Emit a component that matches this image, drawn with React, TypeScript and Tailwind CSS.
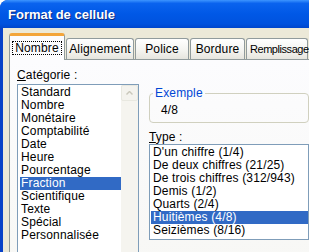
const categories = [
  "Standard",
  "Nombre",
  "Monétaire",
  "Comptabilité",
  "Date",
  "Heure",
  "Pourcentage",
  "Fraction",
  "Scientifique",
  "Texte",
  "Spécial",
  "Personnalisée",
];

const types = [
  "D'un chiffre (1/4)",
  "De deux chiffres (21/25)",
  "De trois chiffres (312/943)",
  "Demis (1/2)",
  "Quarts (2/4)",
  "Huitièmes (4/8)",
  "Seizièmes (8/16)",
];

const tabs = ["Alignement", "Police", "Bordure"];
const tabWidths = ["w-[68px]", "w-[54px]", "w-[55px]"];

export default function App() {
  return (
    <div className="flex h-[252px] w-[309px] flex-col overflow-hidden rounded-tl-[8px] bg-[#0842C8] font-['Liberation_Sans',sans-serif] text-[12px] leading-[13px] tracking-[0.15px] text-black">
      <div className="flex h-[28px] shrink-0 items-center bg-[linear-gradient(#3D95FF_0%,#0A63EE_12%,#0058E6_50%,#0052DE_85%,#0046CC_100%)] pl-[8px] pt-[1px]">
        <span className="text-[13px] font-bold tracking-normal text-white [text-shadow:1px_1px_#0a2a80]">Format de cellule</span>
      </div>

      <div className="ml-[3px] flex flex-1 flex-col bg-[#ECE9D8] pl-[6px] pt-[5px]">
        <div className="flex h-[26px] items-end">
          <div className="relative z-10 -mb-[1px] flex h-[27px] w-[56px] shrink-0 items-center justify-center rounded-t-[3px] border-x border-[#919B9C] border-t-[3px] border-t-[#F3A53A] bg-[#FCFCFE]">
            <span className="border border-dotted border-black px-[2px] leading-[12px]">Nombre</span>
          </div>
          {tabs.map((t, i) => (
            <div
              key={t}
              className={`ml-[1px] flex h-[21px] ${tabWidths[i]} shrink-0 items-center justify-center rounded-t-[3px] border-x border-t border-[#919B9C] bg-[linear-gradient(#FFFFFF,#F3F3EF_60%,#E6E5DE)] pt-[1px]`}
            >
              {t}
            </div>
          ))}
          <div className="ml-[1px] flex h-[21px] w-[62px] shrink-0 items-center rounded-t-[3px] border-x border-t border-[#919B9C] bg-[linear-gradient(#FFFFFF,#F3F3EF_60%,#E6E5DE)] pl-[3px] pt-[1px] text-[11px] tracking-[-0.45px] whitespace-nowrap">
            Remplissage
          </div>
        </div>

        <div className="flex flex-1 gap-[10px] border-l border-t border-[#919B9C] bg-[linear-gradient(#FCFCFE,#F7F7F4)] pl-[7px] pt-[9px]">
          <div className="flex w-[122px] shrink-0 flex-col">
            <div className="h-[15px]">
              <span className="underline">C</span>atégorie :
            </div>
            <div className="flex h-[200px] border border-[#7F9DB9] bg-white">
              <div className="flex flex-1 flex-col pl-[2px] pt-[1px]">
                {categories.map((c) => (
                  <div
                    key={c}
                    className={`h-[13px] pl-[1px] ${c === "Fraction" ? "bg-[#316AC5] text-white" : ""}`}
                  >
                    {c}
                  </div>
                ))}
              </div>
              <div className="flex w-[17px] flex-col bg-[#F5F4EF]">
                <div className="flex h-[16px] items-center justify-center rounded-[2px] border border-[#E8E8E0] bg-[#F4F3EE]">
                  <svg width="7" height="4" viewBox="0 0 7 4">
                    <path d="M0.5 3.5 L3.5 0.5 L6.5 3.5" fill="none" stroke="#C9C7BA" strokeWidth="1.4" />
                  </svg>
                </div>
              </div>
            </div>
          </div>

          <div className="flex flex-1 flex-col">
            <fieldset className="mt-[18px] h-[36px] rounded-[4px] border border-[#D0D0BF] pl-[11px]">
              <legend className="-ml-[8px] px-[2px] text-[#0046D5]">Exemple</legend>
              <div className="mt-[4px]">4/8</div>
            </fieldset>
            <div className="mt-[8px] h-[12px]">
              <span className="underline">T</span>ype :
            </div>
            <div className="mt-[1px] flex h-[96px] flex-col border border-[#7F9DB9] bg-white pl-[1px] pt-[1px]">
              {types.map((t) => (
                <div
                  key={t}
                  className={`h-[13px] shrink-0 pl-[2px] ${t.startsWith("Huiti") ? "bg-[#316AC5] text-white" : ""}`}
                >
                  {t}
                </div>
              ))}
            </div>
          </div>
        </div>
      </div>
    </div>
  );
}
